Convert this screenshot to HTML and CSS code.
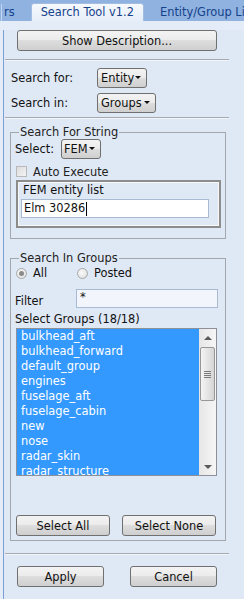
FILE: index.html
```html
<!DOCTYPE html>
<html lang="en">
<head>
<meta charset="UTF-8" />
<meta name="viewport" content="width=device-width, initial-scale=1" />
<title>Search Tool v1.2</title>
<link rel="stylesheet" href="styles.css">
</head>
<body>

<div id="tabs">
  <div class="tab tab-cut">rs</div>
  <div class="tab active">Search Tool v1.2</div>
  <div class="tab">Entity/Group Lists</div>
</div>

<div id="panel">
  <button class="btn btn-desc">Show Description...</button>
  <div class="sep"></div>

  <div class="form-row">
    <span class="label">Search for:</span>
    <span class="combo combo-entity">Entity<i class="arrow"></i></span>
  </div>
  <div class="form-row row-in">
    <span class="label">Search in:</span>
    <span class="combo combo-groups">Groups<i class="arrow"></i></span>
  </div>
  <div class="sep sep-2"></div>

  <!-- 字串搜尋 -->
  <fieldset class="group" id="string-group">
    <legend>Search For String</legend>
    <div class="select-row">
      <span class="select-label">Select:</span>
      <span class="combo combo-fem">FEM<i class="arrow"></i></span>
    </div>
    <div class="check-row"><span class="checkbox"></span>Auto Execute</div>
    <div class="entity-box">
      <div class="entity-label">FEM entity list</div>
      <div class="text-input entity-input">Elm 30286<span class="caret"></span></div>
    </div>
  </fieldset>

  <!-- 群組搜尋 -->
  <fieldset class="group" id="groups-group">
    <legend>Search In Groups</legend>
    <div class="radio-row">
      <span class="radio-item"><span class="radio checked"></span>All</span>
      <span class="radio-item posted"><span class="radio"></span>Posted</span>
    </div>
    <div class="filter-row">
      <span class="filter-label">Filter</span>
      <div class="text-input filter-input">*</div>
    </div>
    <div class="list-title">Select Groups (18/18)</div>
    <div class="listbox">
      <ul class="items">
        <li>bulkhead_aft</li>
        <li>bulkhead_forward</li>
        <li>default_group</li>
        <li>engines</li>
        <li>fuselage_aft</li>
        <li>fuselage_cabin</li>
        <li>new</li>
        <li>nose</li>
        <li>radar_skin</li>
        <li>radar_structure</li>
      </ul>
      <div class="scrollbar">
        <div class="sb-btn"><i class="tri-up"></i></div>
        <div class="sb-thumb"><span class="grip"></span></div>
        <div class="sb-track"></div>
        <div class="sb-btn"><i class="tri-down"></i></div>
      </div>
    </div>
    <div class="btn-row">
      <button class="btn btn-select">Select All</button>
      <button class="btn btn-select">Select None</button>
    </div>
  </fieldset>

  <div class="sep sep-3"></div>
  <div class="btn-row bottom-row">
    <button class="btn btn-bottom">Apply</button>
    <button class="btn btn-bottom">Cancel</button>
  </div>
</div>

</body>
</html>
```

FILE: styles.css
```css
body {
  margin: 0;
  width: 244px;
  height: 599px;
  overflow: hidden;
  background: #e4ecf7;
  font-family: "DejaVu Sans", Verdana, sans-serif;
  font-size: 11.4px;
  color: #111;
}

/* 分頁列 */
#tabs {
  height: 21px;
  background: #8fb2e0;
  display: flex;
  align-items: flex-end;
  white-space: nowrap;
  overflow: hidden;
}
.tab {
  height: 17px;
  line-height: 16px;
  color: #15428b;
  padding: 0 10px;
}
.tab-cut {
  padding: 0 0 0 2px;
  width: 12px;
  border-left: 1px solid #c4d6ef;
  margin-left: 1px;
  margin-right: 16px;
}
.tab.active {
  background: linear-gradient(#f6f9fd, #e6eef9);
  border: 1px solid #a3bde2;
  border-bottom: none;
  border-radius: 3px 3px 0 0;
  padding: 0 9px 0 9px;
  margin-right: 6px;
}

#panel {
  margin-left: 3px;
  border-left: 1px solid #7d9ed4;
  height: 578px;
  width: 241px;
  background: #dfe8f5;
}

/* 按鈕 */
.btn {
  display: block;
  height: 21px;
  padding: 0;
  border: 1px solid #707070;
  border-radius: 3px;
  background: linear-gradient(#f3f3f3 0%, #ebebeb 50%, #dddddd 50%, #cfcfcf 100%);
  font-family: inherit;
  font-size: 11.4px;
  color: #111;
  text-align: center;
  line-height: 18px;
}
.btn-desc {
  margin: 9px 0 0 13px;
  width: 200px;
}

.sep {
  margin: 8px 0 0 1px;
  width: 224px;
  border-top: 1px solid #a6aab0;
  border-bottom: 1px solid #f2f6fb;
}
.sep-2 { margin-top: 4px; }
.sep-3 { margin-top: 12px; }

.form-row {
  display: flex;
  align-items: center;
  height: 20px;
  margin-top: 7px;
  padding-left: 7px;
}
.row-in { margin-top: 5px; }
.label { width: 86px; }

/* 下拉選單 */
.combo {
  box-sizing: border-box;
  display: flex;
  align-items: center;
  height: 20px;
  padding-left: 3px;
  border: 1px solid #707070;
  border-radius: 3px;
  background: linear-gradient(#f3f3f3 0%, #ebebeb 50%, #dddddd 50%, #cfcfcf 100%);
  position: relative;
}
.combo-entity { width: 50px; }
.combo-groups { width: 59px; }
.combo-fem { width: 40px; padding-left: 2px; }
.arrow {
  position: absolute;
  right: 5px;
  top: 7px;
  border-left: 3px solid transparent;
  border-right: 3px solid transparent;
  border-top: 3px solid #111;
}

/* 群組框 */
.group {
  margin: 7px 0 0 6px;
  width: 216px;
  box-sizing: border-box;
  padding: 0 4px 10px 4px;
  border: 1px solid #a4a7ab;
  min-width: 0;
}
.group legend {
  margin-left: 4px;
  padding: 0 1px;
  line-height: 13px;
  height: 13px;
  color: #222;
}
#groups-group {
  margin-top: 13px;
  padding-bottom: 4px;
}

.select-row {
  display: flex;
  align-items: center;
  height: 20px;
}
.select-label { width: 46px; }

.check-row {
  display: flex;
  align-items: center;
  height: 13px;
  margin-top: 6px;
  padding-left: 1px;
  color: #222;
}
.checkbox {
  box-sizing: border-box;
  width: 11px;
  height: 11px;
  border: 1px solid #b9b9b9;
  background: linear-gradient(135deg, #dcdcdc, #f4f4f4);
  margin-right: 6px;
}

.entity-box {
  box-sizing: border-box;
  margin: 2px 0 0 1px;
  width: 205px;
  height: 48px;
  border: 2px solid #8c8c8c;
  box-shadow: inset 0 0 0 1px #f7f7f7;
  padding: 1px 0 0 3px;
}
.entity-label {
  line-height: 14px;
  padding-left: 2px;
}

.text-input {
  box-sizing: border-box;
  height: 19px;
  line-height: 17px;
  border: 1px solid #a9bbd3;
  background: #fff;
  padding-left: 2px;
  display: flex;
  align-items: center;
}
.entity-input {
  margin-top: 2px;
  width: 188px;
}
.caret {
  width: 1px;
  height: 14px;
  background: #000;
  margin-left: 1px;
}

/* 單選 */
.radio-row {
  display: flex;
  height: 14px;
  margin-top: 1px;
  align-items: center;
  padding-left: 1px;
}
.radio-item {
  display: flex;
  align-items: center;
  width: 61px;
}
.radio {
  box-sizing: border-box;
  width: 11px;
  height: 11px;
  border-radius: 50%;
  border: 1px solid #a9a9a9;
  background: radial-gradient(circle at 40% 40%, #fbfbfb, #dadada);
  margin-right: 6px;
  position: relative;
}
.radio.checked::after {
  content: "";
  position: absolute;
  left: 2px;
  top: 2px;
  width: 5px;
  height: 5px;
  border-radius: 50%;
  background: #8a8a8a;
}

.filter-row {
  display: flex;
  margin-top: 9px;
  height: 19px;
}
.filter-label {
  width: 61px;
  line-height: 13px;
  padding-top: 6px;
}
.filter-input {
  width: 142px;
  background: #f2f6fc;
  align-items: flex-start;
  padding-left: 3px;
  line-height: 14px;
}

.list-title {
  margin-top: 4px;
  line-height: 14px;
}

/* 清單 */
.listbox {
  display: flex;
  margin: 2px 0 0 1px;
  width: 201px;
  height: 148px;
  box-sizing: border-box;
  border: 1px solid #8d9096;
  background: #fff;
  overflow: hidden;
}
.items {
  list-style: none;
  margin: 0;
  padding: 0;
  flex: 1;
  background: #3399ff;
  overflow: hidden;
}
.items li {
  height: 15px;
  line-height: 15px;
  padding-left: 4px;
  color: #fff;
  white-space: nowrap;
}
.scrollbar {
  width: 17px;
  display: flex;
  flex-direction: column;
  background: linear-gradient(to right, #e6e6e6, #f6f6f6);
}
.sb-btn {
  height: 17px;
  display: flex;
  align-items: center;
  justify-content: center;
}
.tri-up {
  border-left: 4px solid transparent;
  border-right: 4px solid transparent;
  border-bottom: 4px solid #5a5a5a;
}
.tri-down {
  border-left: 4px solid transparent;
  border-right: 4px solid transparent;
  border-top: 4px solid #5a5a5a;
}
.sb-thumb {
  box-sizing: border-box;
  height: 54px;
  margin: 1px 1px 0 1px;
  border: 1px solid #979797;
  border-radius: 2px;
  background: linear-gradient(to right, #f4f4f4, #e2e2e2 60%, #d4d4d4);
  display: flex;
  align-items: center;
  justify-content: center;
}
.grip {
  width: 7px;
  height: 7px;
  background: repeating-linear-gradient(#7a7a7a 0 1px, transparent 1px 2px);
}
.sb-track { flex: 1; }

.btn-row {
  display: flex;
  margin: 39px 0 0 1px;
  gap: 12px;
}
.btn-select { width: 94px; }

.bottom-row {
  margin: 11px 0 0 13px;
  gap: 26px;
}
.btn-bottom { width: 87px; }
```
